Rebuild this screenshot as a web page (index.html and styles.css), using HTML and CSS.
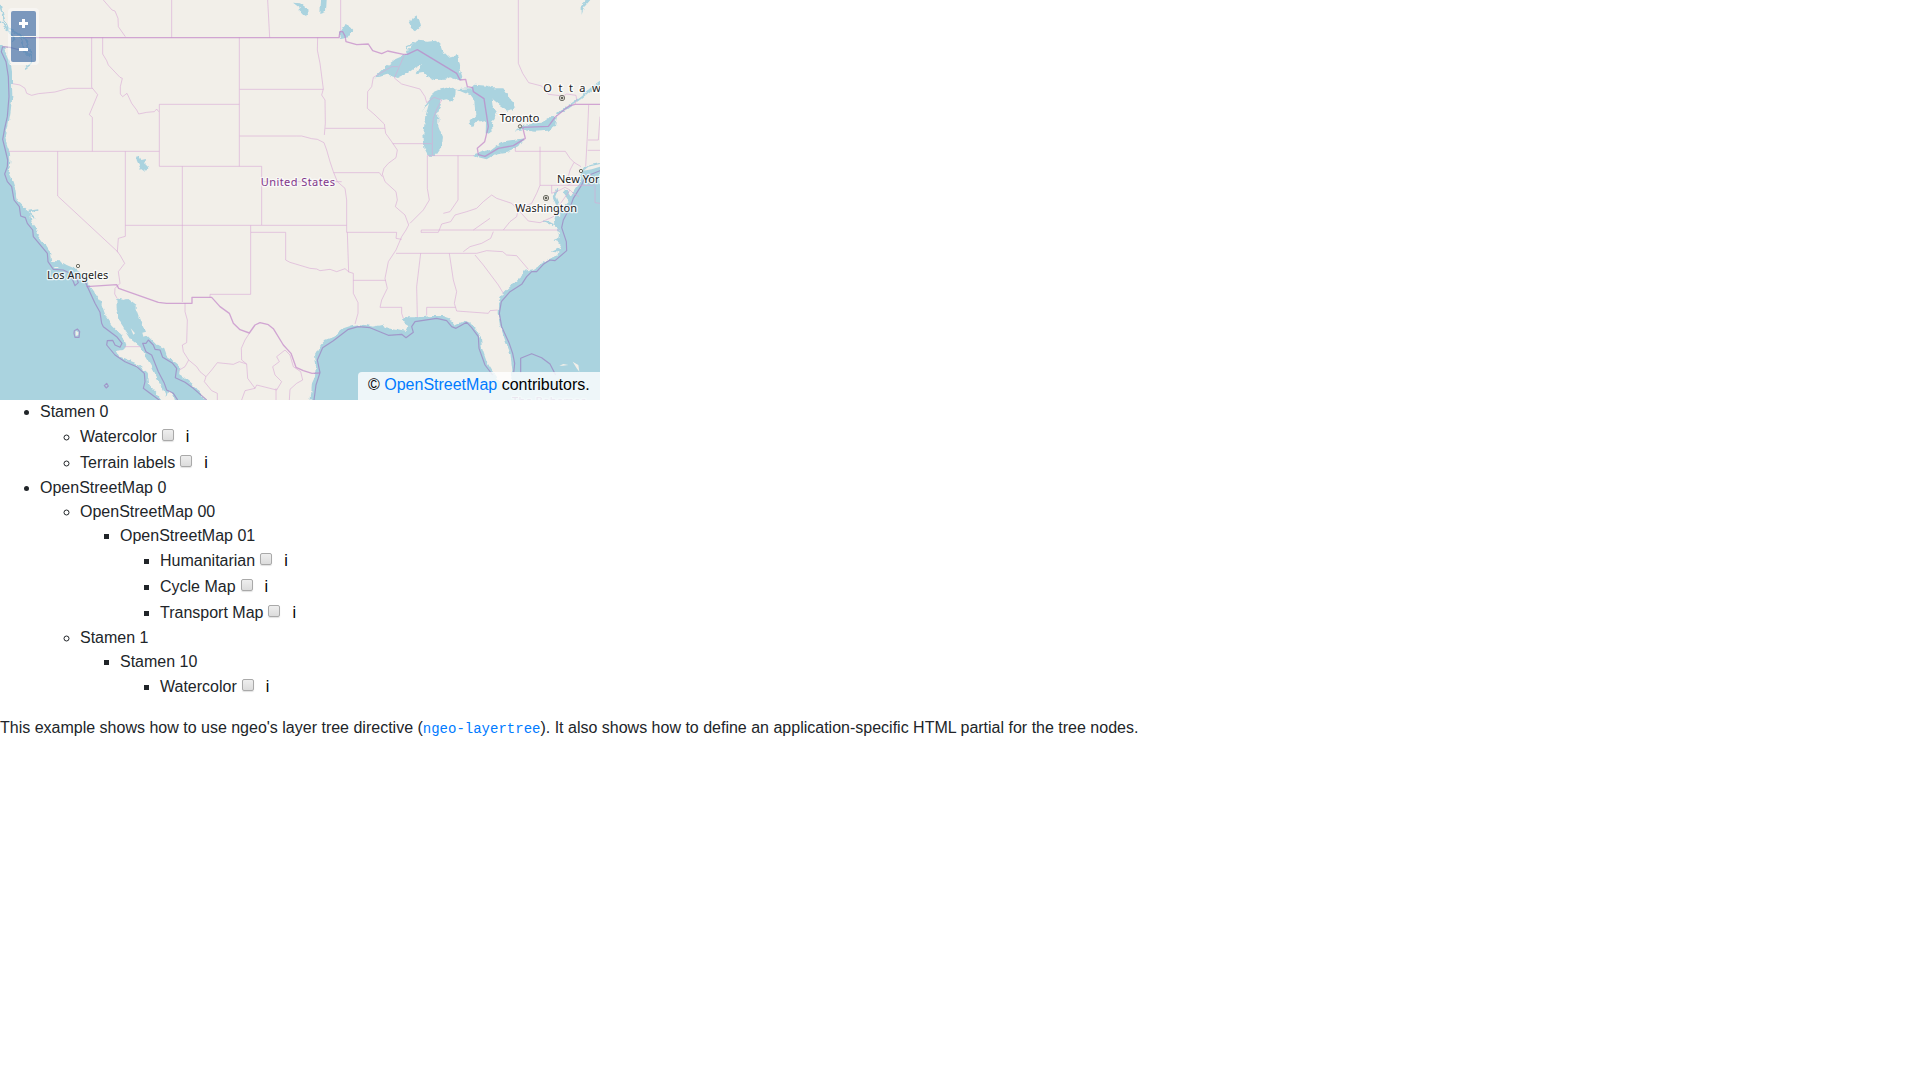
FILE: index.html
```html
<!DOCTYPE html>
<html lang="en">
<head>
<meta charset="utf-8">
<title>Layer tree example</title>
<link rel="stylesheet" href="styles.css">
</head>
<body>
<div class="map">
  <svg class="map-canvas" viewBox="0 0 1800 1200" width="600" height="400">
    <defs>
      <filter id="shore" x="0" y="0" width="1800" height="1200" filterUnits="userSpaceOnUse">
        <feTurbulence type="fractalNoise" baseFrequency=".06" numOctaves="2" seed="4" result="noise"/>
        <feDisplacementMap in="SourceGraphic" in2="noise" scale="14" xChannelSelector="R" yChannelSelector="G"/>
      </filter>
    </defs>
    <!-- oceans and lakes -->
    <g class="water" filter="url(#shore)">
      <path d="M-20 125L10 140 22 165 32 190 36 215 36 250 37 290 31 340 24 380 16 410 22 440 30 460 31 490 26 520 38 545 46 570 50 600 62 612 74 625 90 640 95 665 108 682 110 700 130 725 149 755 154 783 180 784 200 795 226 806 250 825 264 850 282 875 302 905 318 950 335 975 365 1005 376 1035 370 1050 350 1052 360 1070 405 1088 440 1115 444 1150 470 1180 497 1220H-20Z"/>
      <path d="M349 895L372 900 382 897 410 918 410 935 425 975 440 1005 470 1035 493 1048 500 1068 530 1090 541 1100 537 1125 560 1140 590 1165 632 1220H530L520 1184 505 1172 499 1190 488 1165 470 1130 455 1100 440 1075 420 1040 395 1020 360 965 350 925Z"/>
      <path d="M930 1220L936 1150 945 1130 948 1090 945 1065 962 1035 975 1020 1000 1010 1030 985 1060 975 1085 973 1120 980 1145 975 1160 985 1190 990 1215 995 1225 975 1205 962 1220 952 1255 952 1275 950 1295 948 1330 948 1350 955 1365 975 1395 962 1410 968 1430 990 1443 1015 1446 1045 1460 1085 1475 1110 1495 1140 1515 1155 1532 1145 1537 1110 1531 1060 1515 1020 1500 975 1493 940 1495 905 1510 880 1535 855 1560 835 1575 812 1600 808 1620 795 1640 780 1665 770 1680 758 1655 755 1680 743 1683 735 1660 720 1678 713 1680 700 1665 675 1660 655 1672 640 1680 655 1682 628 1706 603 1690 570 1700 570 1712 590 1735 555 1742 525 1750 510 1770 495 1820 485V1220Z"/>
      <path d="M1123 232L1150 205 1187 177 1213 166 1235 140 1255 122 1285 125 1310 122 1323 132 1332 160 1343 170 1371 166 1375 185 1380 210 1387 234 1375 241 1350 232 1335 239 1300 240 1280 228 1268 216 1247 220 1260 200 1268 192 1248 202 1222 220 1194 234 1180 230 1162 224 1143 230Z"/>
      <path d="M1265 334L1288 300 1302 275 1320 268 1350 262 1367 268 1366 288 1350 310 1345 298 1325 300 1315 338 1315 380 1326 408 1323 445 1307 468 1285 467 1273 445 1270 400 1276 350 1287 310Z"/>
      <path d="M1370 267L1415 265 1425 254 1458 257 1475 265 1510 265 1530 293 1546 325 1524 332 1499 315 1475 295 1478 315 1493 335 1476 370 1478 395 1457 404 1458 370 1444 360 1430 362 1416 378 1405 370 1426 345 1423 300 1412 285Z"/>
      <path d="M1422 464L1445 455 1470 450 1490 435 1520 423 1575 415 1560 438 1520 455 1490 460 1460 478 1435 472Z"/>
      <path d="M1545 395L1568 375 1622 368 1645 352 1671 350 1665 378 1645 392 1600 395 1570 390Z"/>
      <path d="M1235 55L1248 45 1258 60 1263 80 1248 94 1233 84 1228 68ZM408 470L418 468 424 480 438 477 436 490 448 502 435 515 422 506 412 488ZM882 8L900 10 921 25 924 45 910 49 900 38 898 20ZM960 0L980 0 978 35 958 42ZM1018 100L1035 76 1050 78 1060 90 1045 112 1020 117ZM1745 45L1745 15 1760 0 1771 0 1752 22Z"/>
    </g>
    <g class="stream" filter="url(#shore)">
      <path d="M0 15L12 60 25 85 50 100 75 115 90 150 95 190 75 205M0 65L20 85 45 120M60 110L75 155 88 170M1227 160L1220 140 1245 130M85 635L115 630M88 640L105 655M1730 1210"/>
      <path class="stream-wide" d="M1830 225L1775 265 1740 295 1715 313 1670 345M1672 565L1662 590 1672 615 1672 650 1665 675M1690 575L1710 600M1750 510L1800 492M1630 660L1660 675"/>
    </g>
    <g class="islands">
      <path d="M1750 512L1765 500 1800 492 1800 500 1775 508ZM227 992L235 997 235 1005 227 1008ZM427 998L438 995 438 1007 430 1010ZM392 985L405 1000 400 1004ZM163 801h12v3h-12ZM205 815l10 3-3 4ZM1678 1097L1690 1092 1705 1095 1688 1097ZM1718 1085L1735 1095 1738 1115 1730 1105Z"/>
    </g>
    <!-- maritime limits -->
    <g class="maritime">
      <path d="M88 152L60 150 30 142 8 140 4 155 18 185 25 230 27 290 22 350 14 385 8 418 16 450 23 480 22 500 14 522 22 545 35 560 42 600 58 620 62 648 76 653 82 670 98 690 100 710 142 760 144 785 160 808 190 810 210 820 225 857 235 848 228 830 250 832 263 862 285 910 300 937 305 970 310 980 350 1010 366 1030 360 1042 345 1035 338 1021 322 1022 320 1035 345 1065 375 1085 410 1100 433 1120 435 1145 430 1165 450 1180 480 1202"/>
      <path d="M533 1200L520 1180 500 1170 493 1150 475 1115 455 1065 438 1055 428 1030 438 1030 445 1020 460 1035 465 1048 480 1050 488 1072 518 1090 530 1105 526 1133 555 1147 580 1165 620 1200M222 1000L223 992 232 987 239 995 237 1012 225 1012ZM313 1157L320 1150 325 1158 319 1164Z"/>
      <path d="M942 1200L948 1155 960 1118 952 1080 968 1043 1000 1022 1045 988 1075 980 1110 983 1165 1006 1205 1003 1218 1013 1240 997 1235 980 1245 965 1310 955 1340 962 1355 980 1368 985 1400 967 1415 983 1435 1010 1437 1045 1455 1095 1478 1125M1541 1118L1544 1090 1538 1060 1527 1028 1505 980 1498 940 1504 905 1530 875 1565 853 1580 830 1595 815 1610 815 1630 793 1650 780 1665 782 1700 752 1699 725 1685 683 1690 660 1711 620 1720 595 1745 555 1755 530 1800 512M1562 1118V1075L1595 1061 1625 1073 1650 1092 1667 1125"/>
    </g>
    <!-- state and province limits -->
    <g class="states">
      <path d="M310 0L336 30 345 33 354 55 355 80 376 110M515 0V112M803 0L809 112M1022 0V95M1555 0V190L1568 220 1586 248 1625 258 1645 283 1690 288 1700 282 1728 286 1730 300 1725 312"/>
      <path d="M275 113V262L293 284 268 344 277 352V454M308 113V162L320 182 325 195 360 232 367 235 361 260 361 282 368 290 381 280 395 310 410 330 416 342 440 337 463 335 470 327 476 335M38 251L60 255 75 265 80 280 95 286 115 281 165 276 205 265H278M478 313H718M478 313V499M718 113V499M719 268H970M719 408H890L905 408 935 416 952 418 972 428 980 450 990 485 1000 515 1012 545 1035 565 1040 600M24 454H478M173 454V588L355 757M376 454V709M478 499H785V675M547 499V906M376 676H1040M785 545H1025"/>
      <path d="M953 113L952 150 960 190 970 267 965 285 975 300 976 370 973 405M976 385H1155M1001 518H1138M1120 232L1115 260 1103 275 1102 325 1125 345 1153 372 1157 400 1175 425 1192 450 1188 473 1165 490 1152 505 1147 522 1155 545 1188 575 1192 600 1186 620 1215 645 1226 675 1218 690 1205 710 1188 750 1165 785 1155 835 1162 865 1145 900 1140 922H1205V940L1210 955M1178 431H1295M1282 467V565L1288 600 1270 630 1255 645 1230 670M1374 467V600L1350 635 1330 640M1282 467H1422M1138 518L1147 530M1120 232L1175 200H1195M1213 165L1183 234 1205 252 1260 267 1275 290 1280 308 1302 292 1325 300 1310 328 1300 355 1297 380V465"/>
      <path d="M1620 440V556L1610 580 1595 610 1555 625 1550 650 1530 665 1510 690M1620 556H1780M1546 440V454H1696L1710 475 1722 487 1710 510 1705 530 1718 548 1703 556M1722 487L1743 500M1785 556V608L1800 610M1655 556L1655 580 1680 570 1695 562 1710 570 1720 580 1737 590M1710 570L1675 620 1660 650 1620 668 1585 663 1555 630 1535 610 1490 595 1475 585 1450 605 1430 625 1400 635 1365 645 1352 665 1325 672 1315 697H1263L1264 690H1678M1420 690L1470 655M1480 695L1472 715 1445 730 1410 740 1390 755M1188 760H1430L1460 752 1508 755 1520 765 1550 767 1585 808M1425 765L1450 795 1495 855 1510 880M1262 760L1250 860 1252 952M1348 760L1360 840 1370 875 1363 910 1370 933 1465 940 1470 932 1493 930M1367 922H1280V945M1040 600V697H1190L1188 715 1205 718M1042 697L1046 817M1060 841H1157M900 796L930 805 950 807 960 812 990 808 1010 815 1035 806 1047 816 1060 820V880L1074 908 1074 940 1065 972M900 796L870 787 857 780V697H752V883H630V892M752 676V697M1865 315V360L1861 390 1859 450 1860 490M1766 315L1763 390 1757 500M1800 350L1795 420H1764M1763 451H1800"/>
      <path d="M376 709L355 715 352 755 360 765 374 790 355 815 360 850 345 865 344 882 352 896M372 1040H422M555 910V935L562 960 560 1028 547 1035 550 1055 566 1080 590 1100 600 1115 618 1130 613 1145 635 1172 652 1180V1200M566 1080L555 1100 535 1112M618 1130L635 1110 652 1088 700 1093 718 1085 740 1092 743 1135 765 1165 770 1155 830 1170 845 1145 825 1125 818 1100 838 1085 830 1070 855 1050 870 1065 880 1100 902 1115 908 1140 890 1150 870 1168 868 1200M740 1092L725 1080 724 1045 735 1020 748 1000M765 1165L735 1172 725 1200M828 1165V1200"/>
    </g>
    <g class="country">
      <path d="M75 113H1017L1020 95 1028 95 1035 108 1038 125 1070 134 1105 132 1118 152 1145 161 1163 153 1210 163 1222 163 1252 149 1370 220 1380 240 1397 238 1402 260 1418 263 1420 275 1452 296 1465 380 1454 425 1432 445 1435 464 1455 469 1495 445 1540 437 1576 415 1568 382 1645 379 1665 352 1707 318 1725 313H1800"/>
      <path d="M260 860L350 854 356 865 475 907 500 910H576V892H635L660 920 688 940 700 970 720 989 748 999 765 975 780 968 805 974 820 986 850 1035 873 1060 888 1102 910 1112 936 1120 960 1119"/>
    </g>
    <g class="town">
      <circle cx="234" cy="798" r="5"/><circle cx="1560" cy="379" r="5"/><circle cx="1743" cy="513" r="5"/>
      <circle cx="1686" cy="294" r="8"/><circle class="dot" cx="1686" cy="294" r="3"/>
      <circle cx="1638" cy="594" r="8"/><circle class="dot" cx="1638" cy="594" r="3"/>
    </g>
    <g class="label">
      <text x="141" y="837" textLength="184">Los Angeles</text>
      <text x="1630" y="275" textLength="210">Ottawa</text>
      <text x="1499" y="365" textLength="119">Toronto</text>
      <text x="1671" y="549" textLength="145">New York</text>
      <text x="1546" y="637" textLength="185">Washington</text>
      <text class="nation" x="782" y="557" textLength="223">United States</text>
      <text class="nation faint" x="1536" y="1214" textLength="222">The Bahamas</text>
    </g>
  </svg>
  <div class="zoom">
    <button class="zoom-btn zoom-in" aria-label="Zoom in"></button>
    <button class="zoom-btn zoom-out" aria-label="Zoom out"></button>
  </div>
  <div class="attribution">© <a href="#">OpenStreetMap</a> contributors.</div>
</div>
<ul class="tree">
  <li>Stamen 0
    <ul>
      <li><div class="leaf">Watercolor<input type="checkbox"><span class="info">i</span></div></li>
      <li><div class="leaf">Terrain labels<input type="checkbox"><span class="info">i</span></div></li>
    </ul>
  </li>
  <li>OpenStreetMap 0
    <ul>
      <li>OpenStreetMap 00
        <ul>
          <li>OpenStreetMap 01
            <ul>
              <li><div class="leaf">Humanitarian<input type="checkbox"><span class="info">i</span></div></li>
              <li><div class="leaf">Cycle Map<input type="checkbox"><span class="info">i</span></div></li>
              <li><div class="leaf">Transport Map<input type="checkbox"><span class="info">i</span></div></li>
            </ul>
          </li>
        </ul>
      </li>
      <li>Stamen 1
        <ul>
          <li>Stamen 10
            <ul>
              <li><div class="leaf">Watercolor<input type="checkbox"><span class="info">i</span></div></li>
            </ul>
          </li>
        </ul>
      </li>
    </ul>
  </li>
</ul>
<p class="desc">This example shows how to use ngeo's layer tree directive (<a href="#"><code>ngeo-layertree</code></a>). It also shows how to define an application-specific HTML partial for the tree nodes.</p>
</body>
</html>
```
FILE: styles.css
```css
body {
  margin: 0;
  background: #fff;
  color: #212529;
  font: 16px/24px "Liberation Sans", Arial, sans-serif;
}
a { color: #007bff; text-decoration: none; }

.map {
  position: relative;
  width: 600px;
  height: 400px;
  overflow: hidden;
  background: #f2efe9;
}
.map-canvas { display: block; }
.map-canvas path { stroke-linejoin: round; }
.water { fill: #aad3df; }
.stream { fill: none; stroke: #aad3df; stroke-width: 5; }
.stream-wide { stroke-width: 7; }
.islands { fill: #f2efe9; }
.maritime { fill: none; stroke: #9b7fc0; stroke-opacity: .7; stroke-width: 3.5; }
.states { fill: none; stroke: #d9a9d6; stroke-opacity: .6; stroke-width: 3; }
.country { fill: none; stroke: #bf7cc6; stroke-opacity: .65; stroke-width: 4; }
.town { fill: #f2efe9; stroke: #55554c; stroke-width: 2.5; }
.dot { fill: #55554c; }
.label {
  font-family: "Noto Sans", sans-serif;
  font-size: 33px;
  fill: #222;
  stroke: #fff;
  stroke-opacity: .75;
  stroke-width: 8;
  stroke-linejoin: round;
  paint-order: stroke;
}
.nation { fill: #81378b; stroke-opacity: .6; }
.faint { opacity: .5; }

.zoom {
  position: absolute;
  left: 8px;
  top: 8px;
  padding: 3px;
  border-radius: 4px;
  background: rgba(255, 255, 255, .4);
}
.zoom-btn {
  display: grid;
  place-items: center;
  width: 25px;
  height: 25px;
  padding: 0;
  border: 0;
  border-radius: 2px 2px 0 0;
  background: rgba(0, 60, 136, .5);
}
.zoom-out { margin-top: 1px; border-radius: 0 0 2px 2px; }
.zoom-btn::before {
  content: "";
  width: 9px;
  height: 9px;
  background: linear-gradient(#fff, #fff) center / 9px 3px no-repeat;
}
.zoom-in::before {
  background:
    linear-gradient(#fff, #fff) center / 9px 3px no-repeat,
    linear-gradient(#fff, #fff) center / 3px 9px no-repeat;
}
.attribution {
  position: absolute;
  right: 0;
  bottom: 0;
  box-sizing: border-box;
  width: 242px;
  height: 28px;
  padding: 1px 0 0 10px;
  border-radius: 4px 0 0;
  background: rgba(255, 255, 255, .8);
  color: #000;
  white-space: nowrap;
}

ul { margin: 0; padding-left: 40px; }
.tree { margin-bottom: 16px; }
.leaf { height: 26px; line-height: 26px; }
.leaf input {
  appearance: none;
  box-sizing: border-box;
  width: 12px;
  height: 12px;
  margin: 0 12px 0 5px;
  vertical-align: 1px;
  border: 1px solid #a9a9a9;
  border-radius: 2px;
  background: linear-gradient(#eee, #dcdcdc);
  box-shadow: 0 1px 1px rgba(0, 0, 0, .12);
}
.info { color: #000; }
.desc { margin: 0 0 16px; }
code { font: 14px "Liberation Mono", "Courier New", monospace; }
```
